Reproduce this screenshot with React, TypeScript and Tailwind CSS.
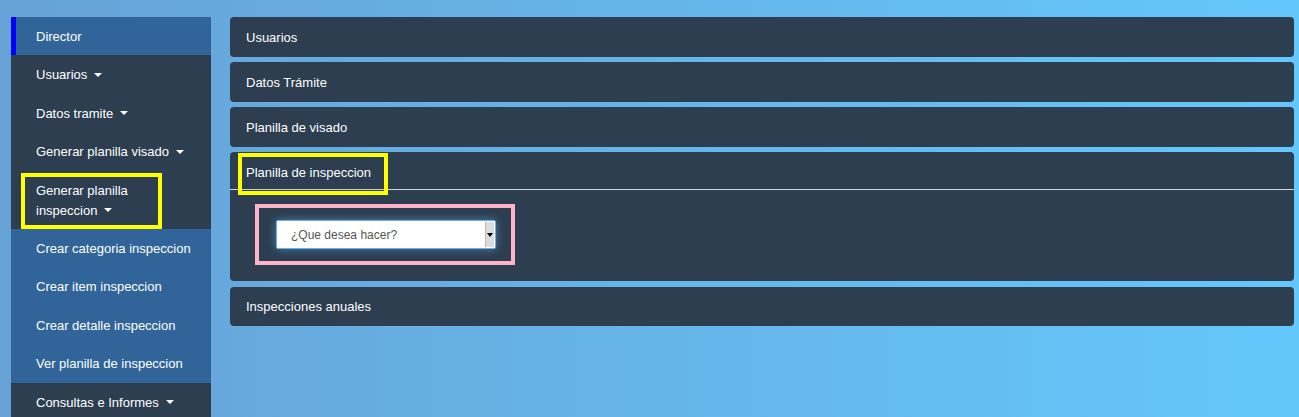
import React from "react";

const Caret = () => (
  <span className="inline-block ml-[7px] align-middle w-0 h-0 border-l-[4px] border-r-[4px] border-t-[4px] border-l-transparent border-r-transparent border-t-white relative top-[-1px]" />
);

type Item = { label: React.ReactNode; tone: "active" | "dark" | "blue"; caret?: boolean; hl?: boolean };

const items: Item[] = [
  { label: "Director", tone: "active" },
  { label: "Usuarios", tone: "dark", caret: true },
  { label: "Datos tramite", tone: "dark", caret: true },
  { label: "Generar planilla visado", tone: "dark", caret: true },
  { label: "Generar planilla inspeccion", tone: "dark", caret: true, hl: true },
  { label: "Crear categoria inspeccion", tone: "blue" },
  { label: "Crear item inspeccion", tone: "blue" },
  { label: "Crear detalle inspeccion", tone: "blue" },
  { label: "Ver planilla de inspeccion", tone: "blue" },
  { label: "Consultas e Informes", tone: "dark", caret: true },
];

function SideItem({ it }: { it: Item }) {
  const bg = it.tone === "dark" ? "bg-[#2c3e50]" : "bg-[#31659a]";
  return (
    <div className={`relative ${bg} pt-[10px] pb-[8.4px] pl-[25px] pr-[10px] leading-[20px] text-[13px] text-white`}>
      {it.tone === "active" && <div className="absolute left-0 top-0 bottom-0 w-[5px] bg-[#0000ff]" />}
      {it.hl ? (
        <>
          <div className="w-[110px]">
            Generar planilla inspeccion
            <Caret />
          </div>
          <div className="absolute left-[10px] top-[2px] w-[141px] h-[56px] border-[4px] border-[#ffff00]" />
        </>
      ) : (
        <span>
          {it.label}
          {it.caret && <Caret />}
        </span>
      )}
    </div>
  );
}

function Panel({ title }: { title: string }) {
  return (
    <div className="h-[39.5px] rounded-[4px] bg-[#2c3e50] px-[16px] pt-[1px] flex items-center text-[13px] text-white">
      {title}
    </div>
  );
}

export default function App() {
  return (
    <div
      className="w-[1299px] h-[417px] overflow-hidden bg-[linear-gradient(to_right,#67a2d6,#64c7fb)] flex items-start pt-[17px]"
      style={{ fontFamily: '"Liberation Sans", Arial, sans-serif' }}
    >
      <div className="ml-[11px] w-[200px] shrink-0 flex flex-col">
        {items.map((it, i) => (
          <SideItem key={i} it={it} />
        ))}
      </div>
      <div className="ml-[19px] w-[1064px] flex flex-col gap-[5.5px]">
        <Panel title="Usuarios" />
        <Panel title="Datos Trámite" />
        <Panel title="Planilla de visado" />
        <div className="rounded-[4px] bg-[#2c3e50] text-white">
          <div className="relative h-[38px] px-[16px] pt-[4px] flex items-center text-[13px] border-b border-[#cfd3d8]">
            Planilla de inspeccion
            <div className="absolute left-[8px] top-[1px] w-[150px] h-[42px] border-[4px] border-[#ffff00]" />
          </div>
          <div className="pt-[14px] pb-[16px] pl-[25px]">
            <div className="w-[260px] h-[61px] border-[4px] border-[#ffb3c8] pl-[17px] pt-[12px]">
              <div className="relative w-[220px] h-[29px] bg-white border border-[#66afe9] rounded-[2px] shadow-[0_0_8px_rgba(102,175,233,0.6)] flex items-center pl-[14px] text-[12px] text-[#555]">
                ¿Que desea hacer?
                <div className="absolute right-[1px] top-[1px] bottom-[1px] w-[9px] bg-[#dcdcdc] border-l border-[#b8b8b8] flex items-center justify-center">
                  <span className="w-0 h-0 border-l-[3px] border-r-[3px] border-t-[4px] border-l-transparent border-r-transparent border-t-black" />
                </div>
              </div>
            </div>
          </div>
        </div>
        <Panel title="Inspecciones anuales" />
      </div>
    </div>
  );
}
